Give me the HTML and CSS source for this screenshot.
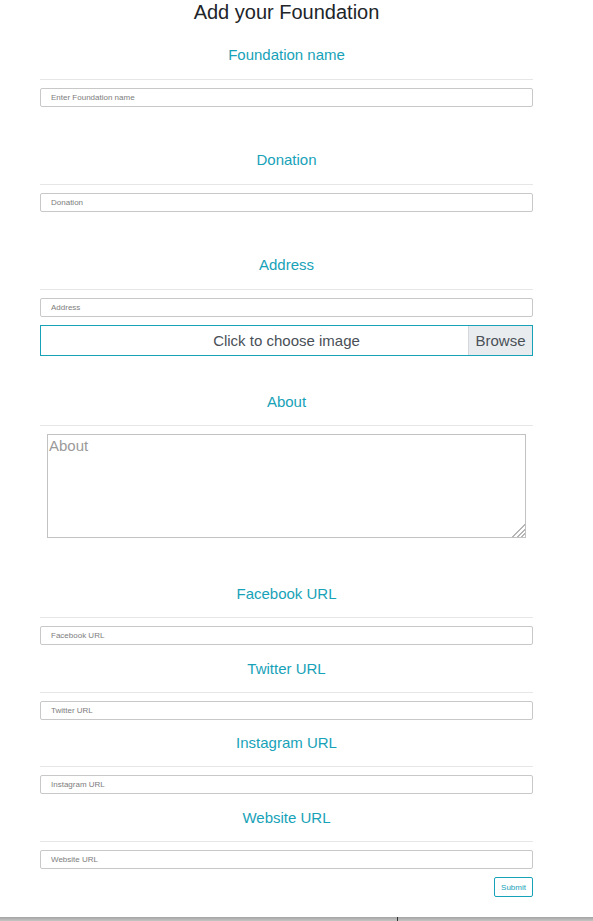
FILE: index.html
```html
<!DOCTYPE html>
<html lang="en">
<head>
<meta charset="utf-8">
<title>Add your Foundation</title>
<link rel="stylesheet" href="styles.css">
</head>
<body>
<div class="container">
  <h1 class="title">Add your Foundation</h1>

  <div class="section first">
    <h2 class="label">Foundation name</h2>
    <hr class="rule">
    <input class="field" type="text" placeholder="Enter Foundation name">
  </div>

  <div class="section big">
    <h2 class="label">Donation</h2>
    <hr class="rule">
    <input class="field" type="text" placeholder="Donation">
  </div>

  <div class="section big">
    <h2 class="label">Address</h2>
    <hr class="rule">
    <input class="field" type="text" placeholder="Address">
    <label class="file">
      <span class="file-text">Click to choose image</span>
      <span class="file-btn">Browse</span>
    </label>
  </div>

  <div class="section about">
    <h2 class="label">About</h2>
    <hr class="rule">
    <div class="area-wrap">
      <textarea class="area" placeholder="About"></textarea>
      <span class="grip"></span>
    </div>
  </div>

  <div class="section after-area">
    <h2 class="label">Facebook URL</h2>
    <hr class="rule">
    <input class="field" type="text" placeholder="Facebook URL">
  </div>

  <div class="section">
    <h2 class="label">Twitter URL</h2>
    <hr class="rule">
    <input class="field" type="text" placeholder="Twitter URL">
  </div>

  <div class="section tight">
    <h2 class="label">Instagram URL</h2>
    <hr class="rule">
    <input class="field" type="text" placeholder="Instagram URL">
  </div>

  <div class="section">
    <h2 class="label">Website URL</h2>
    <hr class="rule">
    <input class="field" type="text" placeholder="Website URL">
  </div>

  <div class="actions">
    <button class="submit" type="button">Submit</button>
  </div>
</div>
<div class="bottom-bar"><span class="tick"></span></div>
</body>
</html>
```

FILE: styles.css
```css
html, body {
  margin: 0;
  padding: 0;
  background: #fff;
  overflow: hidden;
}

body {
  font-family: "Liberation Sans", Arial, sans-serif;
  color: #212529;
  height: 921px;
}

.container {
  margin-left: 40px;
  width: 493px;
}

.title {
  margin: 0;
  font-size: 20px;
  font-weight: 400;
  line-height: 24px;
  text-align: center;
  color: #212529;
}

.section {
  margin-top: 15px;
}

.section.tight {
  margin-top: 14px;
}

.section.first {
  margin-top: 22px;
}

.section.big {
  margin-top: 44px;
}

.section.about {
  margin-top: 37px;
}

.section.after-area {
  margin-top: 47px;
}

.label {
  margin: 0;
  font-size: 15px;
  font-weight: 400;
  line-height: 18px;
  text-align: center;
  color: #17a2b8;
}

.rule {
  margin: 14px 0 0 0;
  border: 0;
  border-top: 1px solid #e6e6e6;
  height: 0;
}

.section.first .rule,
.section.big .rule {
  margin-top: 15px;
}

.field {
  display: block;
  box-sizing: border-box;
  width: 100%;
  height: 19px;
  margin: 8px 0 0 0;
  padding: 0 10px;
  border: 1px solid #c8c8c8;
  border-radius: 2px;
  font-family: "Liberation Sans", Arial, sans-serif;
  font-size: 8px;
  color: #495057;
  background: #fff;
  outline: none;
}

.field::placeholder {
  color: #7d7d7d;
  opacity: 1;
}

.file {
  position: relative;
  display: flex;
  align-items: center;
  justify-content: center;
  box-sizing: border-box;
  height: 31px;
  margin-top: 8px;
  border: 1px solid #17a2b8;
  background: #fff;
  font-size: 15px;
  color: #495057;
  cursor: pointer;
}

.file-text {
  line-height: 18px;
}

.file-btn {
  position: absolute;
  top: 0;
  right: 0;
  bottom: 0;
  width: 63px;
  display: flex;
  align-items: center;
  justify-content: center;
  background: #e9ecef;
  border-left: 1px solid #d4d8dc;
  color: #495057;
}

.area-wrap {
  position: relative;
  width: 479px;
  height: 104px;
  margin: 8px 0 0 7px;
}

.area {
  display: block;
  box-sizing: border-box;
  width: 100%;
  height: 100%;
  margin: 0;
  padding: 2px 1px;
  border: 1px solid #c2c2c2;
  font-family: "Liberation Sans", Arial, sans-serif;
  font-size: 15px;
  color: #495057;
  background: #fff;
  outline: none;
  resize: none;
}

.area::placeholder {
  color: #9a9a9a;
  opacity: 1;
}

.grip {
  position: absolute;
  right: 1px;
  bottom: 1px;
  width: 14px;
  height: 14px;
  pointer-events: none;
  background: repeating-linear-gradient(135deg, transparent 0 1.5px, #b5b5b5 1.5px 3px);
  clip-path: polygon(100% 0, 100% 100%, 0 100%);
}

.actions {
  display: flex;
  justify-content: flex-end;
  margin-top: 8px;
}

.submit {
  box-sizing: border-box;
  height: 20px;
  width: 39px;
  padding: 0;
  border: 1px solid #17a2b8;
  border-radius: 2px;
  background: #fff;
  color: #17a2b8;
  font-family: "Liberation Sans", Arial, sans-serif;
  font-size: 8px;
}

.bottom-bar {
  position: fixed;
  left: 0;
  right: 0;
  bottom: 0;
  height: 4px;
  background: linear-gradient(#a3a3a3, #c6c6c6);
}

.tick {
  position: absolute;
  left: 397px;
  top: 0;
  width: 1px;
  height: 4px;
  background: #333;
}
```
